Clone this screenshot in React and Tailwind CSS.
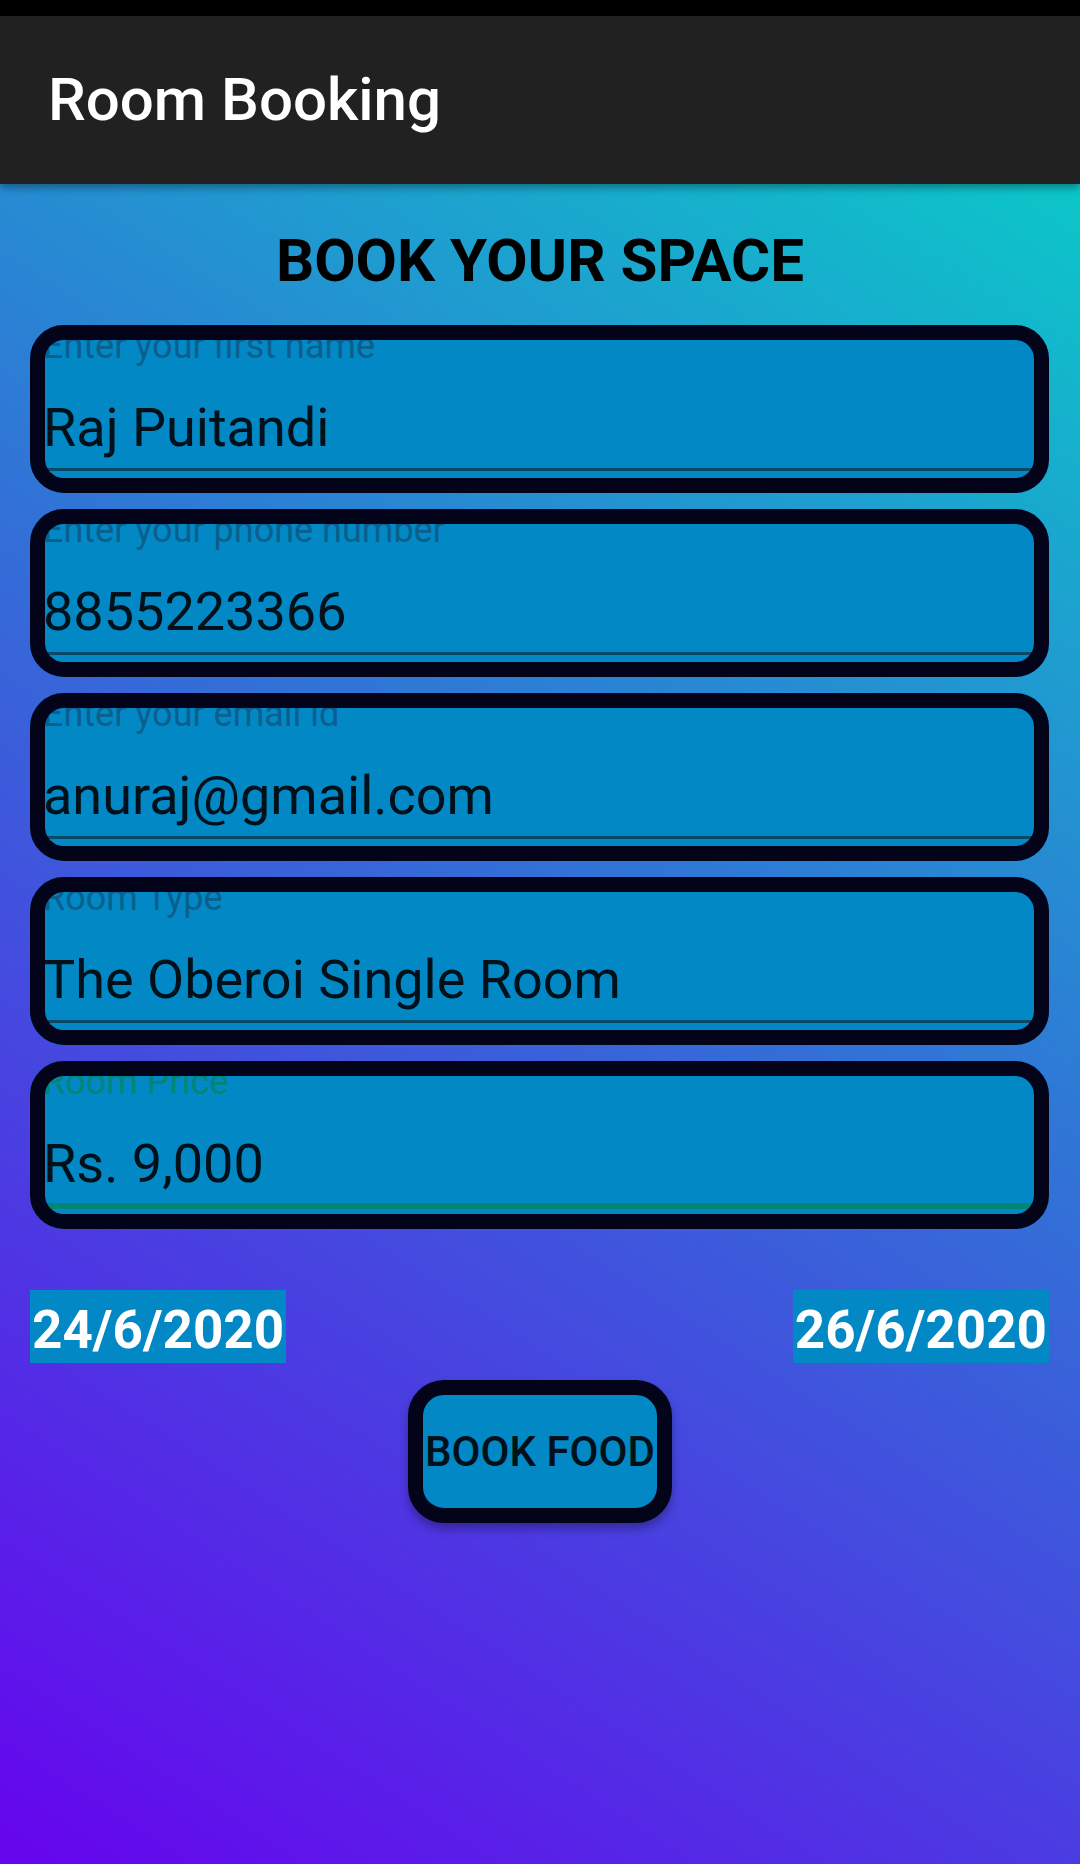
const fields = [
  { label: 'Enter your first name', value: 'Raj Puitandi' },
  { label: 'Enter your phone number', value: '8855223366' },
  { label: 'Enter your email id', value: 'anuraj@gmail.com' },
  { label: 'Room Type', value: 'The Oberoi Single Room' },
  { label: 'Room Price', value: 'Rs. 9,000', focused: true },
];

function Field({ label, value, focused }) {
  return (
    <div className="relative h-[168px] rounded-[34px] bg-[#0288c5] px-[13px]">
      <div
        className={
          'text-[36px] leading-[42px] whitespace-nowrap ' +
          (focused ? 'text-[#008577]' : 'text-[#0b5f8c]')
        }
      >
        {label}
      </div>
      <div className="mt-[29px] text-[54px] leading-[63px] text-[#02101a] whitespace-nowrap">
        {value}
      </div>
      {focused ? (
        <div className="mt-[8px] -mx-[1px] h-[6px] bg-[#008577]" />
      ) : (
        <div className="mt-[9px] -mx-[1px] h-[3px] bg-[#0a4868]" />
      )}
      <div className="pointer-events-none absolute inset-0 rounded-[34px] border-[15px] border-[#03031a]" />
    </div>
  );
}

export default function App() {
  return (
    <div
      className="flex h-[1864px] w-[1080px] flex-col overflow-hidden bg-[linear-gradient(33deg,#6604ee_0%,#356ad8_50%,#05d6c6_100%)]"
      style={{ fontFamily: 'Roboto, "Noto Sans", sans-serif' }}
    >
      <div className="h-[16px] bg-black" />
      <div className="relative z-10 flex h-[168px] items-center bg-[#212121] px-[48px] shadow-[0_4px_8px_rgba(0,0,0,0.35)]">
        <span className="text-[60px] font-medium leading-none text-white">Room Booking</span>
      </div>

      <h1 className="mt-[42px] text-center text-[60px] font-bold leading-[70px] text-black">
        BOOK YOUR SPACE
      </h1>

      <div className="mt-[29px] ml-[30px] mr-[31px] flex flex-col gap-[16px]">
        {fields.map((f) => (
          <Field key={f.label} {...f} />
        ))}
      </div>

      <div className="mt-[61px] ml-[30px] mr-[31px] flex justify-between">
        <div className="h-[73px] bg-[#0288c5] px-[2px] pt-[9px] text-[53px] font-bold leading-[62px] text-white">
          24/6/2020
        </div>
        <div className="h-[73px] bg-[#0288c5] px-[2px] pt-[9px] text-[53px] font-bold leading-[62px] text-white">
          26/6/2020
        </div>
      </div>

      <div className="mt-[17px] flex justify-center">
        <button className="flex h-[143px] w-[264px] items-center justify-center rounded-[36px] border-[15px] border-[#03031a] bg-[#0288c5] text-[42px] font-medium whitespace-nowrap text-[#02101a] shadow-[0_6px_10px_rgba(0,0,0,0.3)]">
          BOOK FOOD
        </button>
      </div>
    </div>
  );
}
